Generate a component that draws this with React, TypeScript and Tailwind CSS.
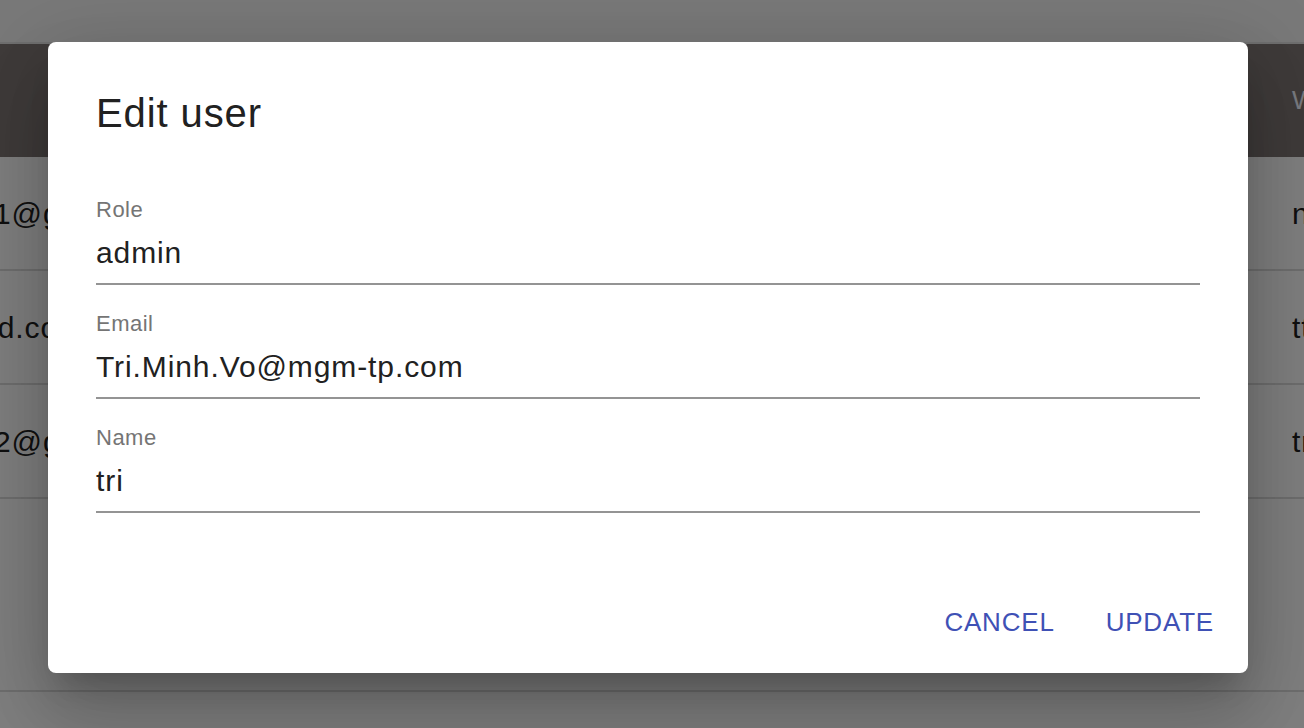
import React from 'react';

const ROWS = [
  { email: 'user1@gmail.com', name: 'nguyen' },
  { email: 'tt@yd.com', name: 'ttran' },
  { email: 'user2@gmail.com', name: 'tri' },
];

const FIELDS = [
  { label: 'Role', value: 'admin' },
  { label: 'Email', value: 'Tri.Minh.Vo@mgm-tp.com' },
  { label: 'Name', value: 'tri' },
];

const UserTable: React.FC = () => (
  <div className="w-full">
    <div className="h-[44px] bg-[#f3f3f3] border-b-2 border-[#dedede]" />
    <div className="h-[113px] bg-[#7e7674] flex items-center -ml-[68px]">
      <div className="flex-1 min-w-0" />
      <div className="w-[12px] shrink-0 whitespace-nowrap text-[26px] text-[#f0f4ff] tracking-[0.8px] font-medium">
        Workspace
      </div>
    </div>
    {ROWS.map((row) => (
      <div key={row.email} className="h-[114px] bg-white border-b-2 border-[#dcdcdc] flex items-center -ml-[68px]">
        <div className="flex-1 min-w-0 text-[30px] text-[#212121] tracking-[0.9px] whitespace-nowrap">{row.email}</div>
        <div className="w-[12px] shrink-0 whitespace-nowrap text-[30px] text-[#212121] tracking-[0.9px]">{row.name}</div>
      </div>
    ))}
    <div className="h-[193px] bg-white border-b-2 border-[#dcdcdc]" />
    <div className="h-[40px] bg-white" />
  </div>
);

const Field: React.FC<{ label: string; value: string }> = ({ label, value }) => (
  <div className="border-b-2 border-[#949494] pb-[12px]">
    <div className="text-[22px] leading-[24px] text-[#757575] tracking-[0.5px]">{label}</div>
    <div className="mt-[13px] text-[30px] leading-[36px] text-[#212121] tracking-[0.9px]">{value}</div>
  </div>
);

const App: React.FC = () => {
  return (
    <div className="relative w-[1304px] h-[728px] overflow-hidden bg-white font-['Liberation_Sans',Arial,sans-serif]">
      <UserTable />

      {/* backdrop + dialog */}
      <div className="absolute inset-0 bg-black/50 pt-[42px] pl-[48px]">
        <div className="w-[1200px] bg-white rounded-[8px] flex flex-col shadow-[0_21px_28px_-13px_rgba(0,0,0,0.2),0_45px_71px_6px_rgba(0,0,0,0.14),0_17px_86px_15px_rgba(0,0,0,0.12)]">
          <h2 className="pt-[41px] px-[48px] text-[40px] leading-[60px] text-[#212121] tracking-[0.9px] font-normal">
            Edit user
          </h2>
          <div className="mt-[55px] px-[48px] flex flex-col gap-[27px]">
            {FIELDS.map((f) => (
              <Field key={f.label} label={f.label} value={f.value} />
            ))}
          </div>
          <div className="mt-[75px] pb-[17px] pr-[18px] flex justify-end gap-[19px]">
            <button type="button" className="px-[16px] py-[11px] text-[26px] leading-[46px] uppercase text-[#3f51b5] tracking-[0.8px] rounded">
              Cancel
            </button>
            <button type="button" className="px-[16px] py-[11px] text-[26px] leading-[46px] uppercase text-[#3f51b5] tracking-[0.8px] rounded">
              Update
            </button>
          </div>
        </div>
      </div>
    </div>
  );
};

export default App;
